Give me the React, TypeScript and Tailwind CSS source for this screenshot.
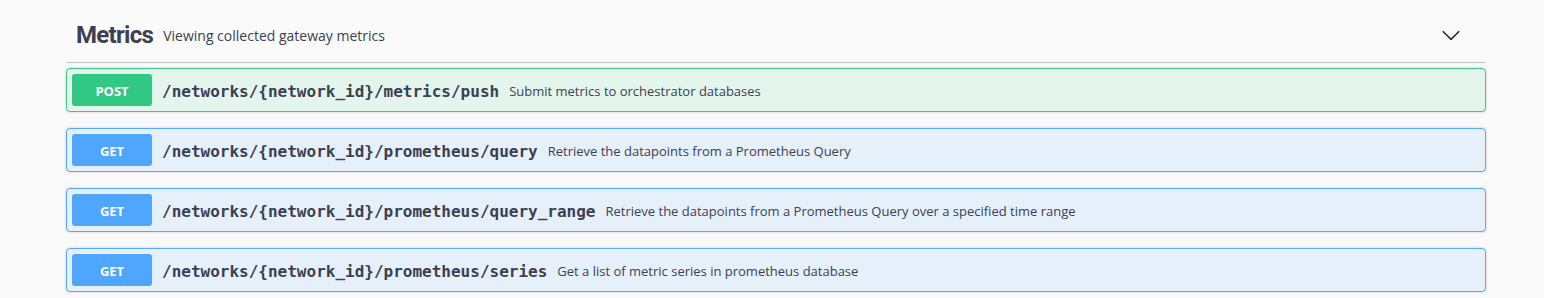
import React from 'react';

type Op = { method: 'POST' | 'GET'; path: string; summary: string };

const ops: Op[] = [
  { method: 'POST', path: '/networks/{network_id}/metrics/push', summary: 'Submit metrics to orchestrator databases' },
  { method: 'GET', path: '/networks/{network_id}/prometheus/query', summary: 'Retrieve the datapoints from a Prometheus Query' },
  {
    method: 'GET',
    path: '/networks/{network_id}/prometheus/query_range',
    summary: 'Retrieve the datapoints from a Prometheus Query over a specified time range',
  },
  { method: 'GET', path: '/networks/{network_id}/prometheus/series', summary: 'Get a list of metric series in prometheus database' },
];

function OpBlock({ op }: { op: Op }) {
  const isPost = op.method === 'POST';
  return (
    <div
      className={
        isPost
          ? 'mb-[16px] h-[44px] rounded-[4px] border border-[#3cca89] bg-[#e4f5ed] shadow-[0_0_3px_rgba(0,0,0,0.19)] flex items-center px-[5px]'
          : 'mb-[16px] h-[44px] rounded-[4px] border border-[#55a9fe] bg-[#e6f0fb] shadow-[0_0_3px_rgba(0,0,0,0.19)] flex items-center px-[5px]'
      }
    >
      <span
        className={
          isPost
            ? 'w-[80px] h-[32px] pt-[4px] rounded-[3px] bg-[#31c884] text-white text-[13px] font-bold flex items-center justify-center font-["Open_Sans",sans-serif]'
            : 'w-[80px] h-[32px] pt-[4px] rounded-[3px] bg-[#4fa6fe] text-white text-[13px] font-bold flex items-center justify-center font-["Open_Sans",sans-serif]'
        }
      >
        {op.method}
      </span>
      <span className='mt-[4px] px-[10px] text-[16px] font-bold text-[#3b4151] font-["DejaVu_Sans_Mono",monospace]'>{op.path}</span>
      <span className='mt-[4px] text-[13px] text-[#3b4151] font-["Open_Sans",sans-serif]'>{op.summary}</span>
    </div>
  );
}

export default function App() {
  return (
    <div className="w-full h-[298px] bg-[#fafafa] overflow-hidden">
      <div className="ml-[66px] w-[1420px] pt-[10px]">
        <div className="h-[53px] flex items-center pl-[10px] pr-[25px] pb-[3px] border-b border-[rgba(59,65,81,0.3)] mb-[5px]">
          <span className='text-[24px] font-bold tracking-[-0.7px] text-[#3b4151] font-["Roboto",sans-serif]'>Metrics</span>
          <span className='ml-[10px] mt-[1px] text-[14px] text-[#3b4151] font-["Open_Sans",sans-serif]'>
            Viewing collected gateway metrics
          </span>
          <svg className="ml-auto" width="20" height="20" viewBox="0 0 20 20" fill="#222">
            <path d="M17.418 6.109c.272-.268.709-.268.979 0s.271.701 0 .969l-7.908 7.83c-.27.268-.707.268-.979 0l-7.908-7.83c-.27-.268-.27-.701 0-.969.271-.268.709-.268.979 0L10 13.25l7.418-7.141z" />
          </svg>
        </div>
        {ops.map((op) => (
          <OpBlock key={op.path} op={op} />
        ))}
      </div>
    </div>
  );
}
